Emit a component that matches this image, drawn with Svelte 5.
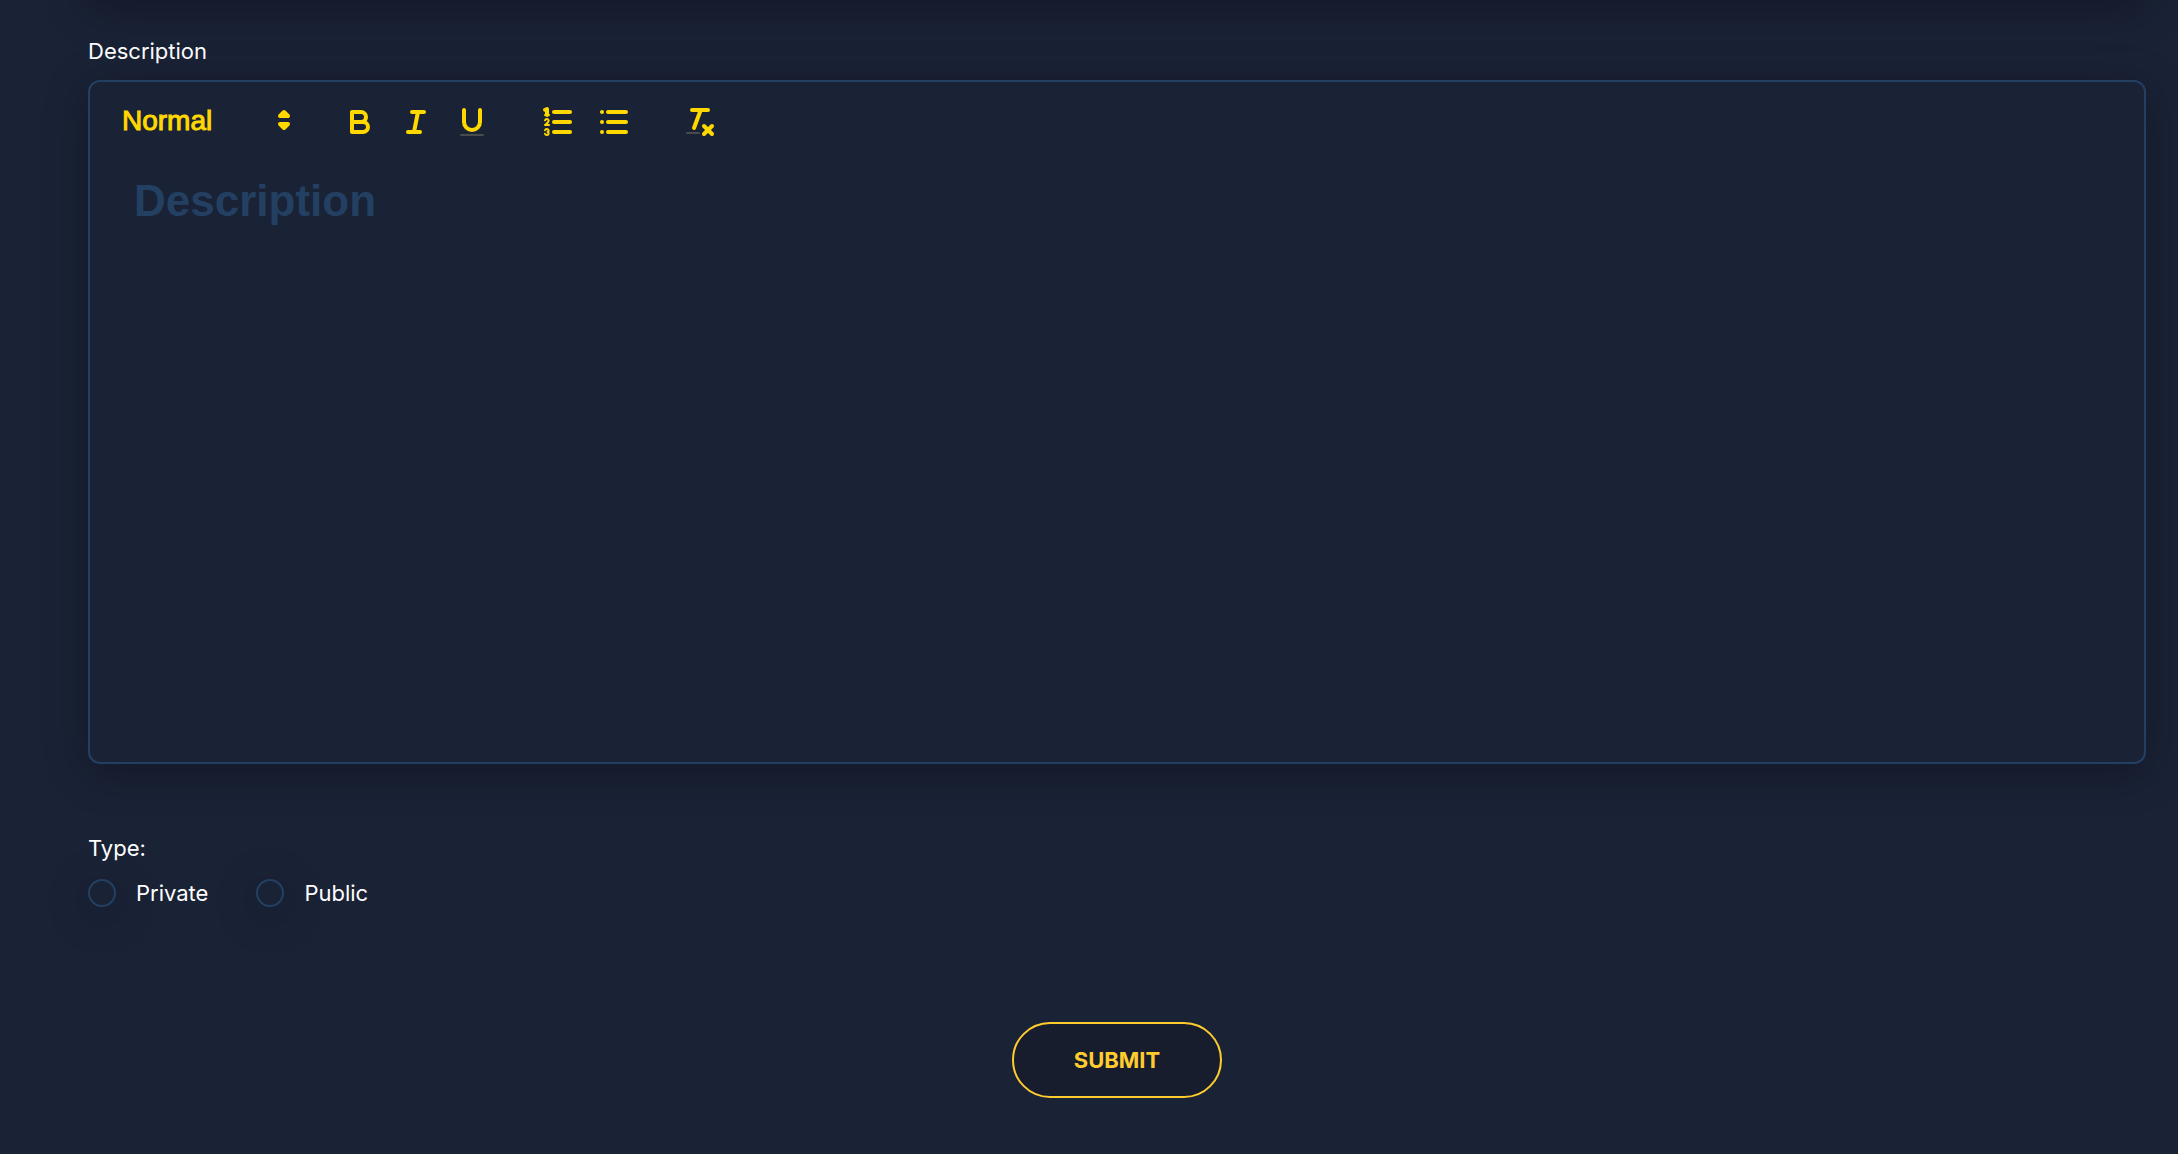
<script lang="ts">
  const HEADINGS = ['Heading 1', 'Heading 2', 'Heading 3', 'Normal'];
  const TYPES = [
    { value: 'private', label: 'Private' },
    { value: 'public', label: 'Public' },
  ];

  let heading = $state('Normal');
  let description = $state('');
  let type = $state('');

  const submit = (e: Event) => e.preventDefault();
</script>

<form class="form" onsubmit={submit}>
  <label class="label" for="description">Description</label>

  <div class="editor">
    <div class="toolbar" role="toolbar" aria-label="Formatting">
      <div class="picker">
        <select class="picker__select" aria-label="Text style" bind:value={heading}>
          {#each HEADINGS as h}
            <option value={h}>{h}</option>
          {/each}
        </select>
        <svg class="icon picker__caret" viewBox="0 0 18 18" aria-hidden="true">
          <polygon class="stroke solid" points="7 11 9 13 11 11 7 11" />
          <polygon class="stroke solid" points="7 7 9 5 11 7 7 7" />
        </svg>
      </div>

      <div class="group">
        <button type="button" class="tool" aria-label="Bold">
          <svg class="icon" viewBox="0 0 18 18">
            <path class="stroke" d="M5,4H9.5A2.5,2.5,0,0,1,12,6.5v0A2.5,2.5,0,0,1,9.5,9H5V4Z" />
            <path class="stroke" d="M5,9h5.5A2.5,2.5,0,0,1,13,11.5v0A2.5,2.5,0,0,1,10.5,14H5V9Z" />
          </svg>
        </button>
        <button type="button" class="tool" aria-label="Italic">
          <svg class="icon" viewBox="0 0 18 18">
            <line class="stroke" x1="7" x2="13" y1="4" y2="4" />
            <line class="stroke" x1="5" x2="11" y1="14" y2="14" />
            <line class="stroke" x1="8" x2="10" y1="14" y2="4" />
          </svg>
        </button>
        <button type="button" class="tool" aria-label="Underline">
          <svg class="icon" viewBox="0 0 18 18">
            <path class="stroke" d="M5,3V9a4.012,4.012,0,0,0,4,4H9a4.012,4.012,0,0,0,4-4V3" />
            <rect class="muted" height="1" rx="0.5" ry="0.5" width="12" x="3" y="15" />
          </svg>
        </button>
      </div>

      <div class="group">
        <button type="button" class="tool" aria-label="Numbered list">
          <svg class="icon" viewBox="0 0 18 18">
            <line class="stroke" x1="7" x2="15" y1="4" y2="4" />
            <line class="stroke" x1="7" x2="15" y1="9" y2="9" />
            <line class="stroke" x1="7" x2="15" y1="14" y2="14" />
            <line class="stroke thin" x1="2.5" x2="4.5" y1="5.5" y2="5.5" />
            <path
              class="stroke thin solid"
              d="M3.5,6A0.5,0.5,0,0,1,3,5.5V3.085l-0.276.138A0.5,0.5,0,0,1,2.053,3c-0.124-.247-0.023-0.324.224-0.447l1-.5A0.5,0.5,0,0,1,4,2.5v3A0.5,0.5,0,0,1,3.5,6Z"
            />
            <path class="stroke thin" d="M4.5,10.5h-2c0-.234,1.85-1.076,1.85-2.234A0.959,0.959,0,0,0,2.5,8.156" />
            <path
              class="stroke thin"
              d="M2.5,14.846a0.959,0.959,0,0,0,1.85-.109A0.7,0.7,0,0,0,3.75,14a0.688,0.688,0,0,0,.6-0.736,0.959,0.959,0,0,0-1.85-.109"
            />
          </svg>
        </button>
        <button type="button" class="tool" aria-label="Bullet list">
          <svg class="icon" viewBox="0 0 18 18">
            {#each [4, 9, 14] as y}
              <line class="stroke" x1="6" x2="15" y1={y} y2={y} />
              <line class="stroke" x1="3" x2="3" y1={y} y2={y} />
            {/each}
          </svg>
        </button>
      </div>

      <div class="group">
        <button type="button" class="tool" aria-label="Clear formatting">
          <svg class="icon" viewBox="0 0 18 18">
            <line class="stroke" x1="5" x2="13" y1="3" y2="3" />
            <line class="stroke" x1="6" x2="9.35" y1="12" y2="3" />
            <line class="stroke" x1="11" x2="15" y1="11" y2="15" />
            <line class="stroke" x1="15" x2="11" y1="11" y2="15" />
            <rect class="muted" height="1" rx="0.5" ry="0.5" width="7" x="2" y="14" />
          </svg>
        </button>
      </div>
    </div>

    <textarea id="description" class="editor__text" placeholder="Description" bind:value={description}></textarea>
  </div>

  <fieldset class="types">
    <legend class="label">Type:</legend>
    <div class="types__row">
      {#each TYPES as t}
        <label class="radio">
          <input class="radio__input" type="radio" name="type" value={t.value} bind:group={type} />
          {t.label}
        </label>
      {/each}
    </div>
  </fieldset>

  <button type="submit" class="submit">SUBMIT</button>
</form>

<style>
  :global(body) {
    background: #1a2236;
  }

  .form {
    --yellow: #ffd800;
    --line: #234062;
    --shadow: 0 8px 44px rgba(0, 0, 0, 0.3);
    position: relative;
    display: flex;
    flex-direction: column;
    box-sizing: border-box;
    min-height: 100vh;
    padding: 36px 32px 54px 88px;
    overflow: hidden;
    color: #fff;
    background: #1a2236;
    font-family: Inter, sans-serif;
    font-size: 22px;
    line-height: 30px;
  }

  /* shadow cast by the field above the scrolled edge */
  .form::before {
    content: '';
    position: absolute;
    right: 32px;
    bottom: 100%;
    left: 88px;
    height: 80px;
    box-shadow: var(--shadow);
  }

  .label {
    padding: 0;
  }

  .editor {
    display: flex;
    flex-direction: column;
    margin-top: 14px;
    border: 2px solid var(--line);
    border-radius: 12px;
    background: #1a2236;
    box-shadow: var(--shadow);
  }

  .toolbar {
    display: flex;
    flex-wrap: wrap;
    gap: 30px;
    padding: 16px;
  }

  .group {
    display: flex;
  }

  .picker {
    position: relative;
    width: 196px;
    height: 48px;
  }

  .picker__select {
    appearance: none;
    width: 100%;
    height: 44px;
    padding: 0 36px 0 16px;
    border: 0;
    background: none;
    color: var(--yellow);
    font: 500 28px 'Liberation Sans', Arial, sans-serif;
    -webkit-text-stroke: 1px var(--yellow);
    cursor: pointer;
  }

  .picker__caret {
    position: absolute;
    top: 4px;
    right: 0;
    pointer-events: none;
  }

  .tool {
    width: 56px;
    height: 48px;
    padding: 6px 10px;
    border: 0;
    background: none;
    cursor: pointer;
  }

  .icon {
    display: block;
    width: 36px;
    height: 36px;
  }

  .stroke {
    fill: none;
    stroke: var(--yellow);
    stroke-linecap: round;
    stroke-linejoin: round;
    stroke-width: 2;
  }

  .thin {
    stroke-width: 1;
  }

  .solid {
    fill: var(--yellow);
  }

  .muted {
    fill: #4a4a4d;
  }

  .editor__text {
    box-sizing: border-box;
    height: 600px;
    padding: 12px 44px;
    border: 0;
    outline: 0;
    resize: none;
    background: none;
    color: #fff;
    font: bold 44px/54px 'Liberation Sans', Arial, sans-serif;
  }

  .editor__text::placeholder {
    color: var(--line);
    opacity: 1;
  }

  .types {
    margin: 69px 0 0;
    padding: 0;
    border: 0;
  }

  .types__row {
    display: flex;
    gap: 48px;
    margin-top: 16px;
    line-height: 28px;
  }

  .radio {
    display: flex;
    gap: 20px;
    cursor: pointer;
  }

  .radio__input {
    appearance: none;
    width: 28px;
    height: 28px;
    margin: 0;
    border: 2px solid var(--line);
    border-radius: 50%;
    box-shadow: var(--shadow);
  }

  .radio__input:checked {
    background: var(--yellow);
  }

  .submit {
    align-self: center;
    margin-top: 115px;
    padding: 22px 60px;
    border: 2px solid #ffcc2e;
    border-radius: 40px;
    background: #181d2e;
    color: #ffcc2e;
    font: 700 22px/28px Inter, sans-serif;
    cursor: pointer;
  }
</style>
